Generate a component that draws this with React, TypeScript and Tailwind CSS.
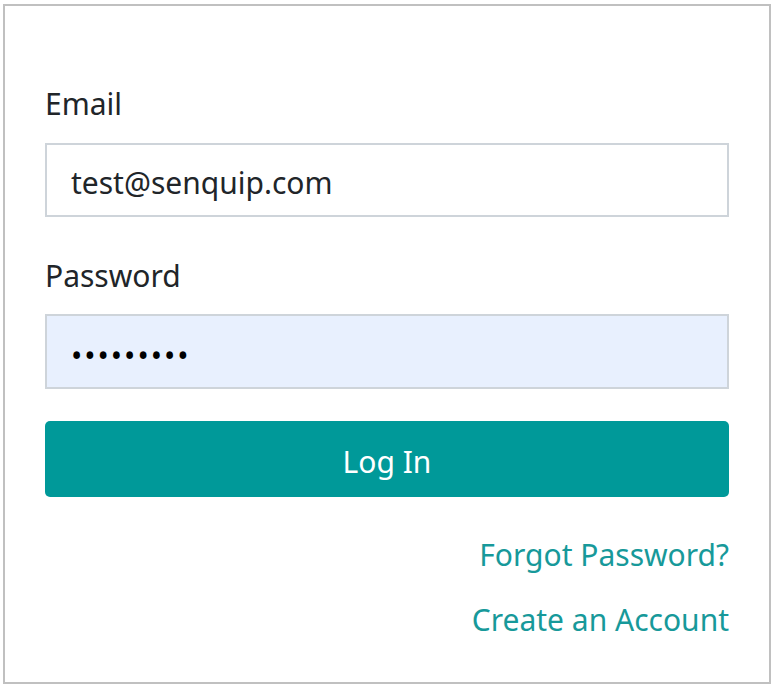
import React from "react";

export default function App() {
  return (
    <div className="w-[772px] h-[684px] bg-white pt-[4px] pl-[3px]" style={{ fontFamily: '"Noto Sans", "Open Sans", sans-serif' }}>
      <div className="w-[768px] h-[680px] border-2 border-[#c0c0c0] px-[40px] pt-[77px] flex flex-col">
        <label className="text-[30px] leading-[42px] text-[#212529]">Email</label>
        <div className="mt-[18px] h-[74px] border-2 border-[#ced4da] bg-white flex items-center px-[24px] pt-[4px] text-[30px] text-[#212529]">
          test@senquip.com
        </div>
        <label className="mt-[38px] text-[30px] leading-[42px] text-[#212529]">Password</label>
        <div className="mt-[17px] h-[75px] border-2 border-[#ced4da] bg-[#e8f0fe] flex items-center px-[24px] pt-[7px] text-[30px] text-black tracking-[2px]">
          •••••••••
        </div>
        <button className="mt-[32px] h-[76px] rounded-[5px] bg-[#009999] text-white text-[30px] flex items-center justify-center pt-[4px]">
          Log In
        </button>
        <div className="mt-[40px] flex flex-col items-end text-[30px] leading-[36px] text-[#17999a]">
          <a className="block">Forgot Password?</a>
          <a className="block mt-[29px]">Create an Account</a>
        </div>
      </div>
    </div>
  );
}
